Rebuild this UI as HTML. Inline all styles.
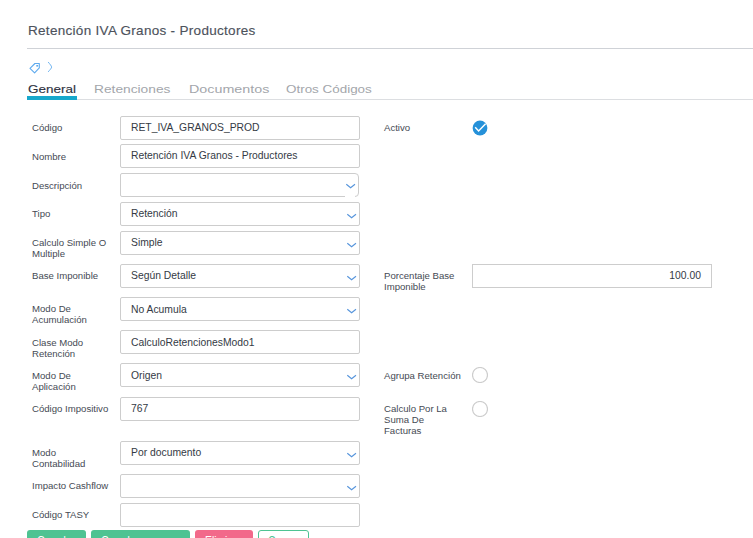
<!DOCTYPE html>
<html><head><meta charset="utf-8">
<style>
html,body{margin:0;padding:0;background:#fff;width:753px;height:538px;overflow:hidden;position:relative;font-family:"Liberation Sans",sans-serif;}
.a{position:absolute;white-space:nowrap;}
.title{left:28px;top:23px;font-size:13.5px;letter-spacing:0.3px;color:#4d525c;line-height:16px;-webkit-text-stroke:0.15px #4d525c;}
.hr{position:absolute;left:27px;right:0;height:1px;background:#d4d6da;}
.tab{position:absolute;top:83px;font-size:11px;line-height:13px;color:#a3a6ab;transform-origin:0 0;white-space:nowrap;}
.lbl{position:absolute;left:32px;font-size:9.6px;line-height:11px;color:#454a54;white-space:nowrap;}
.rl{left:384px;}
.box{position:absolute;left:120px;width:238px;height:22px;border:1px solid #cdcdcd;border-radius:2px;background:#fff;}
.box .t{position:absolute;left:10px;top:4px;font-size:10.35px;line-height:13px;color:#343a45;white-space:nowrap;}
.chev{position:absolute;right:2px;top:10px;width:11px;height:6px;}
.btx{top:535px;font-size:12px;line-height:13px;transform:scaleX(0.86);transform-origin:0 0}
</style></head><body>
<div class="a title">Retención IVA Granos - Productores</div>
<div class="hr" style="top:48px;background:#cfd2d7"></div>

<svg class="a" style="left:28px;top:61px" width="26" height="14" viewBox="0 0 26 14">
 <path d="M2 7.4 L6.9 2.5 L11.3 2.5 L11.3 6.9 L6.6 11.8 Z" fill="none" stroke="#5eaaee" stroke-width="1.1" stroke-linejoin="round"/>
 <rect x="8.3" y="4" width="1.8" height="1.6" fill="#5eaaee"/>
 <path d="M20.4 1.3 C21.8 3, 23.6 5, 23.6 6.1 C23.6 7.2, 21.8 9, 20.4 10.6" fill="none" stroke="#5eaaee" stroke-width="0.9" stroke-linecap="round"/>
</svg>

<div class="tab" style="left:28px;color:#2c3140;transform:scaleX(1.225);-webkit-text-stroke:0.12px #2c3140">General</div>
<div class="tab" style="left:94px;transform:scaleX(1.25)">Retenciones</div>
<div class="tab" style="left:188.5px;transform:scaleX(1.3)">Documentos</div>
<div class="tab" style="left:285.5px;transform:scaleX(1.22)">Otros Códigos</div>
<div class="hr" style="top:99px;background:#dcdee1"></div>
<div class="a" style="left:27px;top:96px;width:50px;height:4px;background:#17a8cc;"></div>

<!-- left column -->
<div class="lbl" style="top:122px">Código</div>
<div class="box" style="top:116px"><span class="t">RET_IVA_GRANOS_PROD</span></div>

<div class="lbl" style="top:151px">Nombre</div>
<div class="box" style="top:144px"><span class="t">Retención IVA Granos - Productores</span></div>

<div class="lbl" style="top:180px">Descripción</div>
<div class="box" style="top:173px;width:237px;border-radius:2px 4px 4px 2px"><svg class="chev" style="top:9px" viewBox="0 0 11 6"><path d="M1.3 1.2 L5.6 4.7 L10 1.2" fill="none" stroke="#5594dc" stroke-width="1.1"/></svg></div>
<div class="a" style="left:345px;top:195px;width:10px;height:3px;background:#fff"></div>

<div class="lbl" style="top:208px">Tipo</div>
<div class="box" style="top:202px"><span class="t">Retención</span><svg class="chev" viewBox="0 0 11 6"><path d="M1.3 1.2 L5.6 4.7 L10 1.2" fill="none" stroke="#5594dc" stroke-width="1.1"/></svg></div>

<div class="lbl" style="top:237px">Calculo Simple O<br>Multiple</div>
<div class="box" style="top:231px"><span class="t">Simple</span><svg class="chev" viewBox="0 0 11 6"><path d="M1.3 1.2 L5.6 4.7 L10 1.2" fill="none" stroke="#5594dc" stroke-width="1.1"/></svg></div>

<div class="lbl" style="top:270px">Base Imponible</div>
<div class="box" style="top:264px"><span class="t">Según Detalle</span><svg class="chev" viewBox="0 0 11 6"><path d="M1.3 1.2 L5.6 4.7 L10 1.2" fill="none" stroke="#5594dc" stroke-width="1.1"/></svg></div>

<div class="lbl" style="top:303px">Modo De<br>Acumulación</div>
<div class="box" style="top:297px"><span class="t" style="top:5px">No Acumula</span><svg class="chev" viewBox="0 0 11 6"><path d="M1.3 1.2 L5.6 4.7 L10 1.2" fill="none" stroke="#5594dc" stroke-width="1.1"/></svg></div>

<div class="lbl" style="top:337px">Clase Modo<br>Retención</div>
<div class="box" style="top:330px"><span class="t" style="top:5px">CalculoRetencionesModo1</span></div>

<div class="lbl" style="top:370px">Modo De<br>Aplicación</div>
<div class="box" style="top:363px"><span class="t" style="top:5px">Origen</span><svg class="chev" viewBox="0 0 11 6"><path d="M1.3 1.2 L5.6 4.7 L10 1.2" fill="none" stroke="#5594dc" stroke-width="1.1"/></svg></div>

<div class="lbl" style="top:403px">Código Impositivo</div>
<div class="box" style="top:397px"><span class="t">767</span></div>

<div class="lbl" style="top:447px">Modo<br>Contabilidad</div>
<div class="box" style="top:441px"><span class="t">Por documento</span><svg class="chev" viewBox="0 0 11 6"><path d="M1.3 1.2 L5.6 4.7 L10 1.2" fill="none" stroke="#5594dc" stroke-width="1.1"/></svg></div>

<div class="lbl" style="top:480px">Impacto Cashflow</div>
<div class="box" style="top:474px"><svg class="chev" viewBox="0 0 11 6"><path d="M1.3 1.2 L5.6 4.7 L10 1.2" fill="none" stroke="#5594dc" stroke-width="1.1"/></svg></div>

<div class="lbl" style="top:509px">Código TASY</div>
<div class="box" style="top:503px"></div>

<!-- right column -->
<div class="lbl rl" style="top:122px">Activo</div>
<svg class="a" style="left:472px;top:120px" width="16" height="16" viewBox="0 0 16 16">
 <circle cx="8" cy="8" r="7.4" fill="#2591d9"/>
 <path d="M3.2 7.3 L6.6 10.9 L13.6 3.7" fill="none" stroke="#fff" stroke-width="1.45"/>
</svg>

<div class="lbl rl" style="top:270px">Porcentaje Base<br>Imponible</div>
<div class="box" style="top:264px;left:472px;border-radius:0"><span class="t" style="left:auto;right:10px">100.00</span></div>

<div class="lbl rl" style="top:370px">Agrupa Retención</div>
<svg class="a" style="left:472px;top:367px" width="16" height="16" viewBox="0 0 16 16"><circle cx="8" cy="8" r="7.5" fill="none" stroke="#cdcdcd" stroke-width="1.2"/></svg>

<div class="lbl rl" style="top:403px">Calculo Por La<br>Suma De<br>Facturas</div>
<svg class="a" style="left:472px;top:401px" width="16" height="16" viewBox="0 0 16 16"><circle cx="8" cy="8" r="7.5" fill="none" stroke="#cdcdcd" stroke-width="1.2"/></svg>

<!-- buttons -->
<div class="a" style="left:27px;top:530px;width:59px;height:12px;background:#4ec392;border-radius:3px"></div>
<div class="a" style="left:91px;top:530px;width:99px;height:12px;background:#4ec392;border-radius:3px"></div>
<div class="a" style="left:195px;top:530px;width:58px;height:12px;background:#f2698a;border-radius:3px"></div>
<div class="a" style="left:258px;top:530px;width:49px;height:12px;border:1px solid #4ec392;border-radius:3px"></div>
<div class="a btx" style="left:37px;color:#fff">Guardar</div>
<div class="a btx" style="left:101px;color:#fff">Guardar y cerrar</div>
<div class="a btx" style="left:205px;color:#fff">Eliminar</div>
<div class="a btx" style="left:268px;color:#4ec392">Cerrar</div>
</body></html>
